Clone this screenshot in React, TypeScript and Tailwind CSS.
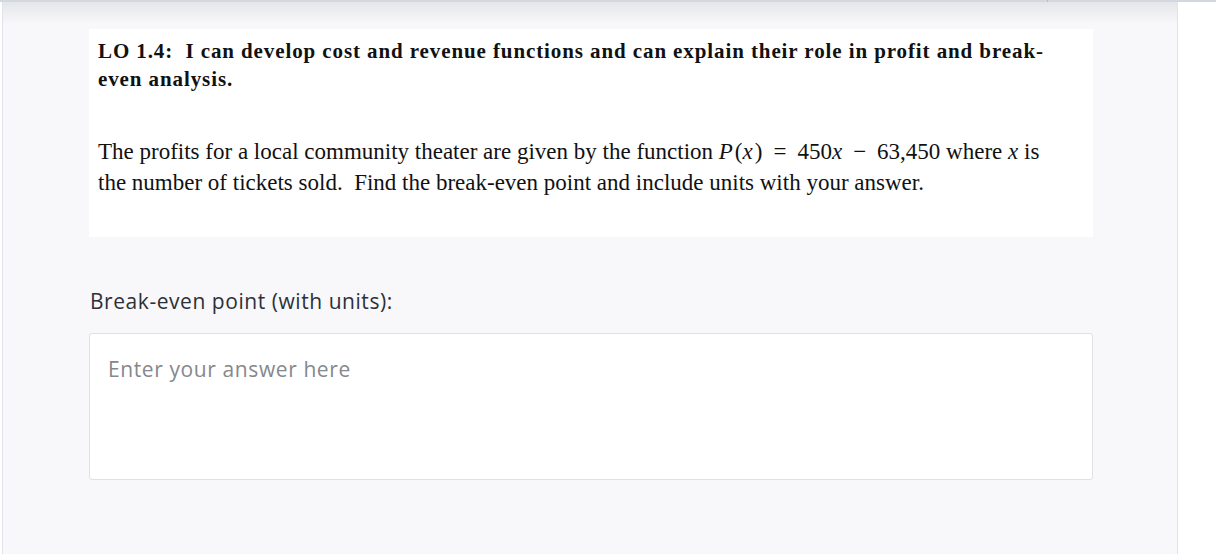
export default function App() {
  return (
    <div className="relative flex h-[554px] w-[1216px] overflow-hidden bg-white">
      {/* top bar edge */}
      <div className="absolute left-0 top-0 h-[2px] w-full bg-[#d3d8e0]" />
      <div className="absolute left-[1047px] top-0 h-[2px] w-px bg-[#b8bec8]" />

      <div className="ml-[2px] flex h-full w-[1176px] flex-col border-x border-[#e2e2ea] bg-[#f8f8fa] bg-[linear-gradient(to_bottom,#e2e4e8_0px,#f8f8fa_24px)] pt-[29px]">
        <div className="ml-[86px] w-[1004px] bg-white px-[9px] pb-[39px] pt-[8px] font-['Liberation_Serif',serif] text-[#111]">
          <p className="text-[21px] font-bold leading-[28px] tracking-[0.9px]">
            LO 1.4:&nbsp; I can develop cost and revenue functions and can explain their role in profit and break-
            <br />
            even analysis.
          </p>
          <p className="mt-[43px] text-[23px] leading-[31px]">
            The profits for a local community theater are given by the function{" "}
            <i className="pr-[2px]">P</i>(<i className="pr-[2px]">x</i>)<span className="mx-[11px]">=</span>450<i>x</i>
            <span className="mx-[11px]">&minus;</span>63,450 where <i>x</i> is
            <br />
            the number of tickets sold.&nbsp; Find the break-even point and include units with your answer.
          </p>
        </div>

        <label className="ml-[87px] mt-[52px] font-['Open_Sans',sans-serif] text-[21px] leading-[24px] tracking-[0.55px] text-[#2d3038]">
          Break-even point (with units):
        </label>

        <div className="ml-[86px] mt-[20px] h-[147px] w-[1004px] rounded-[3px] border border-[#e0e0e6] bg-white px-[18px] pt-[20px] font-['Open_Sans',sans-serif] text-[21px] tracking-[0.6px] text-[#85888c]">
          Enter your answer here
        </div>
      </div>
    </div>
  );
}
